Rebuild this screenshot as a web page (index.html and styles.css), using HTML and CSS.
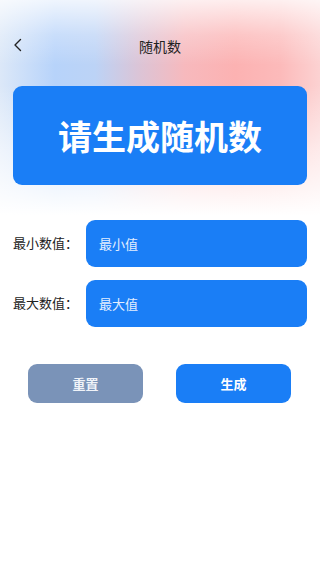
FILE: index.html
```html
<!DOCTYPE html>
<html lang="zh">
<head>
<meta charset="utf-8">
<meta name="viewport" content="width=device-width, initial-scale=1">
<title>随机数</title>
<link rel="stylesheet" href="styles.css">
</head>
<body>
<div class="page">
  <header class="nav">
    <button class="back" aria-label="返回">
      <svg width="10" height="14" viewBox="0 0 10 14"><path d="M7.5 1.5 L2 7 L7.5 12.5" fill="none" stroke="#222" stroke-width="1.4" stroke-linecap="round" stroke-linejoin="round"/></svg>
    </button>
    <h1 class="nav-title">随机数</h1>
  </header>

  <section class="result">请生成随机数</section>

  <div class="form">
    <div class="row">
      <span class="label">最小数值：</span>
      <input class="field" type="text" placeholder="最小值">
    </div>
    <div class="row">
      <span class="label">最大数值：</span>
      <input class="field" type="text" placeholder="最大值">
    </div>
  </div>

  <div class="actions">
    <button class="btn btn-reset">重置</button>
    <button class="btn btn-go">生成</button>
  </div>
</div>
</body>
</html>
```
FILE: styles.css
```css
* { box-sizing: border-box; }
html, body {
  margin: 0;
  padding: 0;
}
body {
  width: 320px;
  height: 568px;
  overflow: hidden;
  font-family: "Noto Sans CJK SC", "Noto Sans", sans-serif;
  color: #222;
  background-color: #fff;
  background-image:
    linear-gradient(to bottom,
      rgba(255,255,255,0.78) 0,
      rgba(255,255,255,0.25) 35px,
      rgba(255,255,255,0) 65px,
      rgba(255,255,255,0) 85px,
      rgba(255,255,255,0.55) 150px,
      #ffffff 215px),
    linear-gradient(to right,
      #dce8f8 0,
      #b7d3fa 55px,
      #bcd3f6 95px,
      #dcc4d6 140px,
      #f7b9bd 185px,
      #fcb2b2 235px,
      #fcbaba 280px,
      #fcd2d2 320px);
  background-repeat: no-repeat;
  background-size: 320px 230px;
}
.page {
  display: flex;
  flex-direction: column;
  padding: 0 13px;
}
.nav {
  position: relative;
  height: 32px;
  margin-top: 30px;
  display: flex;
  align-items: center;
  justify-content: center;
}
.back {
  position: absolute;
  left: 0;
  top: 8px;
  width: 14px;
  height: 14px;
  padding: 0;
  border: 0;
  background: none;
  display: flex;
  align-items: center;
  justify-content: flex-start;
}
.nav-title {
  margin: 0;
  font-size: 14px;
  font-weight: 400;
  color: #222;
  line-height: 30px;
}
.result {
  margin-top: 24px;
  height: 99px;
  border-radius: 9px;
  background: #1a7ef6;
  color: #fff;
  font-size: 34px;
  font-weight: 700;
  display: flex;
  align-items: center;
  justify-content: center;
}
.form {
  margin-top: 35px;
  display: flex;
  flex-direction: column;
  gap: 13px;
}
.row {
  display: flex;
  align-items: center;
}
.label {
  width: 73px;
  font-size: 13px;
  line-height: 16px;
  padding-bottom: 2px;
  color: #222;
  white-space: nowrap;
}
.field {
  flex: 1;
  height: 47px;
  border: 0;
  outline: none;
  border-radius: 9px;
  background: #1a7ef6;
  color: #fff;
  font-family: inherit;
  font-size: 13px;
  padding: 0 13px;
}
.field::placeholder {
  color: #e3eeff;
}
.actions {
  margin-top: 37px;
  display: flex;
  justify-content: space-between;
  padding: 0 15px;
}
.btn {
  width: 115px;
  height: 39px;
  border: 0;
  border-radius: 9px;
  font-family: inherit;
  font-size: 13px;
  font-weight: 700;
  color: #fff;
}
.btn-reset {
  background: #7a93b8;
  color: #f0f3f8;
}
.btn-go {
  background: #1a7ef6;
  margin-right: 1px;
}
```
